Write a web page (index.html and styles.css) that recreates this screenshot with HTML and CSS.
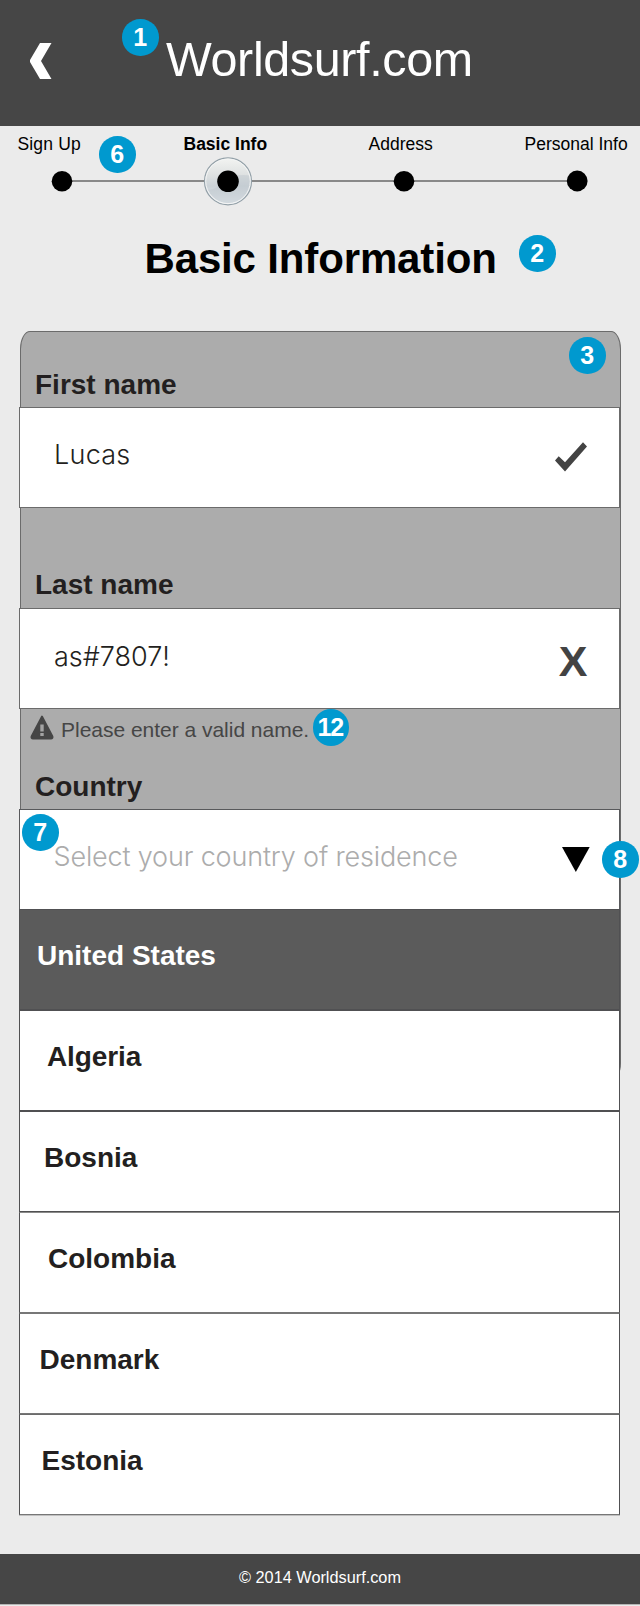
FILE: index.html
```html
<!DOCTYPE html>
<html lang="en">
<head>
<meta charset="utf-8">
<title>Worldsurf.com - Basic Information</title>
<link rel="stylesheet" href="styles.css">
</head>
<body>
<div class="page">
  <header class="header">
    <svg class="back" width="22" height="38" viewBox="0 0 22 38"><path d="M10 1H21.500L11 19L21.500 37H10L0 20V18Z" fill="#fff"/></svg>
    <div class="brand">Worldsurf.com</div>
    <span class="badge badge-1">1</span>
  </header>

  <nav class="steps">
    <div class="step-labels">
      <span class="signup">Sign Up</span>
      <span class="current">Basic Info</span>
      <span>Address</span>
      <span>Personal Info</span>
    </div>
    <svg class="track" width="640" height="50" viewBox="0 0 640 50">
      <defs>
        <linearGradient id="glass" x1="0" y1="0" x2="0" y2="1">
          <stop offset="0" stop-color="#f3f4f2"/><stop offset=".35" stop-color="#dfe2e2"/>
          <stop offset=".6" stop-color="#ccd3d8"/><stop offset="1" stop-color="#e6ebef"/>
        </linearGradient>
      </defs>
      <path d="M62 25H577" stroke="#898989" stroke-width="2"/>
      <circle cx="228" cy="25.300" r="23.500" fill="url(#glass)" stroke="#93a0a8" stroke-width="1.200"/>
      <path d="M228 21Q240 18 250 19.500A22.300 22.300 0 0 1 208 34Q220 33 228 21Z" fill="#bcc5cb" opacity=".45"/>
      <circle cx="228" cy="25.300" r="22.300" fill="none" stroke="#f4f5f5" stroke-width="1"/>
      <circle cx="62" cy="25.300" r="10.300"/>
      <circle cx="228" cy="25.300" r="10.800"/>
      <circle cx="404" cy="25.200" r="10.300"/>
      <circle cx="577.200" cy="25" r="10.400"/>
    </svg>
    <span class="badge badge-6">6</span>
  </nav>

  <div class="heading">
    <h1>Basic Information</h1>
    <span class="badge badge-2">2</span>
  </div>

  <main class="panel">
    <span class="badge badge-3">3</span>
    <div class="label label-first">First name</div>
    <div class="field">
      <span class="value value-first">Lucas</span>
      <svg class="check" width="32" height="30" viewBox="0 0 32 30"><path d="M0 18.500L3.700 14.200L10 20.200L28 .200L32 4.500L10 29.500Z" fill="#434343"/></svg>
    </div>
    <div class="label label-last">Last name</div>
    <div class="field field-last">
      <span class="value value-last">as#7807!</span>
      <span class="cross">X</span>
    </div>
    <div class="label label-country">
      <div class="error">
        <svg class="warn" width="24" height="25" viewBox="0 0 24 25">
          <path d="M12 1.500L22.500 21.500Q23 23.500 21 23.500H3Q1 23.500 1.500 21.500Z" fill="#464646" stroke="#464646" stroke-width="1.800" stroke-linejoin="round"/>
          <path d="M10.300 9.500H13.700V16.500H10.300ZM10.300 18H13.700V21H10.300Z" fill="#a3a3a3"/>
        </svg>
        <span class="error-text">Please enter a valid name.</span>
        <span class="badge badge-12">12</span>
      </div>
      <div>Country</div>
    </div>
    <div class="field field-country">
      <span class="value value-country">Select your country of residence</span>
      <svg class="arrow" width="28" height="25" viewBox="0 0 28 25"><path d="M0 0H27.700L13.850 25Z"/></svg>
      <span class="badge badge-7">7</span>
      <span class="badge badge-8">8</span>
    </div>
    <ul class="options">
      <li class="option selected">United States</li>
      <li class="option algeria">Algeria</li>
      <li class="option bosnia">Bosnia</li>
      <li class="option colombia">Colombia</li>
      <li class="option denmark">Denmark</li>
      <li class="option estonia">Estonia</li>
    </ul>
  </main>

  <footer class="footer">© 2014 Worldsurf.com</footer>
</div>
</body>
</html>
```
FILE: styles.css
```css
* { box-sizing: border-box; }
body {
  margin: 0;
  background: #ebebeb;
  font-family: "Liberation Sans", Arial, sans-serif;
  color: #231f20;
}
.page { width: 640px; height: 1606px; display: flex; flex-direction: column; overflow: hidden; }
svg { display: block; flex: none; }

.header {
  position: relative;
  height: 126px;
  flex: none;
  display: flex;
  align-items: flex-start;
  padding: 31px 0 0 30px;
  background: #464646;
  color: #fff;
}
.back { margin-top: 11px; }
.brand { margin-left: 114px; font-size: 48.500px; line-height: 56px; letter-spacing: -.380px; white-space: nowrap; }

.badge {
  position: absolute;
  width: 36.500px;
  height: 36.500px;
  border-radius: 50%;
  background: #0099cf;
  color: #fff;
  font-size: 25px;
  font-weight: bold;
  line-height: 37px;
  text-align: center;
}
.badge-1 { left: 122px; top: 19px; }
.badge-6 { left: 99px; top: 10px; }
.badge-2 { left: 519px; top: 24px; }
.badge-3 { left: 548px; top: 5px; }
.badge-12 { left: 283px; top: 0; letter-spacing: -1.200px; text-indent: -1px; }
.badge-7 { left: 2px; top: 4px; }
.badge-8 { left: 582px; top: 31px; }

.steps { position: relative; flex: none; height: 85px; padding-top: 8px; color: #000; }
.step-labels {
  display: grid;
  grid-template-columns: 166px 185px 156px 1fr;
  padding-left: 17.500px;
  height: 22px;
  font-size: 17.500px;
  line-height: 20px;
  white-space: nowrap;
}
.signup { letter-spacing: .150px; }
.current { font-weight: bold; }

.heading { position: relative; flex: none; height: 120px; padding: 23px 0 0 144.500px; }
h1 { margin: 0; font-size: 42px; line-height: 50px; letter-spacing: -.150px; color: #000; white-space: nowrap; }

.panel {
  position: relative;
  flex: none;
  width: 601px;
  height: 750px;
  margin-left: 20px;
  background: #acacac;
  border: 1px solid #6b6b6b;
  border-radius: 10px / 18px;
}
.label { display: flex; align-items: flex-end; font-size: 28px; font-weight: bold; line-height: 32px; }
.label-first { height: 75px; padding: 0 0 6px 14px; }
.label-last { height: 100px; padding: 0 0 7px 14px; }
.label-country { height: 100px; flex-direction: column; align-items: flex-start; justify-content: space-between; padding: 0 0 6px 14px; }

.error { position: relative; display: flex; margin-left: -5.500px; padding-top: 6px; font-size: 21px; font-weight: normal; line-height: 24px; letter-spacing: -.020px; color: #464646; white-space: nowrap; }
.error-text { padding: 3px 0 0 7.500px; }

.field {
  position: relative;
  display: flex;
  justify-content: space-between;
  width: 601px;
  height: 101px;
  margin-left: -2px;
  background: #fff;
  border: 1px solid #6b6b6b;
}
.field-country { height: 100px; border-color: #58595b; border-bottom: 0; }
.value { font-family: Inter, "Liberation Sans", sans-serif; font-weight: 300; font-size: 27px; line-height: 32px; padding: 31px 0 0 34px; white-space: nowrap; }
.value-first { letter-spacing: .250px; }
.value-last { padding-top: 32px; }
.value-country { padding-left: 33.500px; color: #acacac; letter-spacing: -.160px; }
.check { margin: 34px 32px 0 0; }
.cross { margin: 28px 31.500px 0 0; font-size: 43px; line-height: 48px; font-weight: bold; color: #434343; }
.arrow { margin: 37px 29px 0 0; }

.options { position: relative; list-style: none; margin: 0 0 0 -2px; padding: 0; width: 601px; }
.option {
  height: 101px;
  padding-top: 30px;
  background: #fff;
  border: 1px solid #505052;
  font-size: 28px;
  font-weight: bold;
  line-height: 32px;
}
.selected { background: #5b5b5b; color: #fff; padding-left: 17px; }
.algeria { padding-left: 27px; letter-spacing: -.100px; }
.bosnia { padding-left: 24px; }
.colombia { padding-left: 28px; border-top-color: #8a8a8a; border-bottom-color: #777; }
.denmark { padding-left: 19.500px; border-top-color: #777; border-bottom-color: #777; }
.estonia { padding-left: 21.500px; border-top-color: #6b6b6b; border-bottom-color: #777; box-shadow: 0 1px #c0c0c0; }

.footer {
  flex: none;
  height: 51px;
  margin-top: 473px;
  padding-top: 13px;
  background: #464646;
  border-bottom: 1px solid #b5b5b5;
  color: #fff;
  font-size: 16.300px;
  line-height: 20px;
  text-align: center;
}
```
